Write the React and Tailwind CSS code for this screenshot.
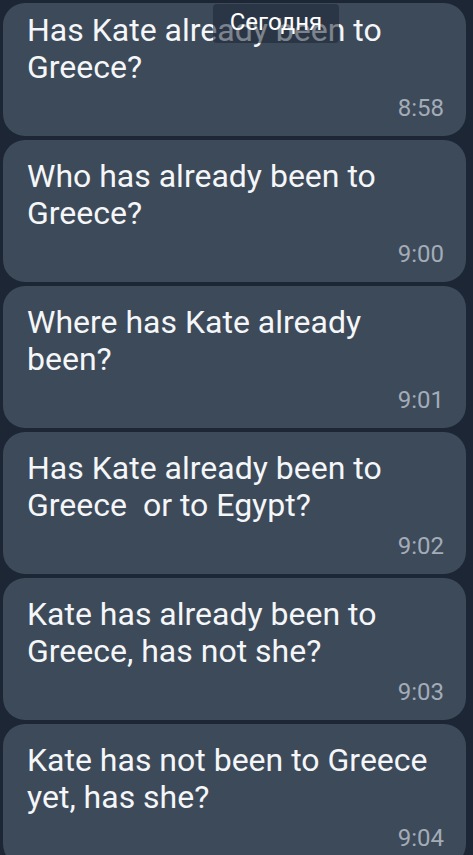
const messages = [
  { id: 1, text: 'Has Kate already been to Greece?', time: '8:58' },
  { id: 2, text: 'Who has already been to Greece?', time: '9:00' },
  { id: 3, text: 'Where has Kate already been?', time: '9:01' },
  { id: 4, text: 'Has Kate already been to Greece\u00a0 or to Egypt?', time: '9:02' },
  { id: 5, text: 'Kate has already been to Greece, has not she?', time: '9:03' },
  { id: 6, text: 'Kate has not been to Greece yet, has she?', time: '9:04' }
];

function Bubble({ message, first }) {
  return (
    <div
      className={`flex shrink-0 flex-col justify-between rounded-[22px] bg-[#3d4a5a] pl-[24px] pr-[22px] pb-[14px] ${
        first ? 'h-[133px] pt-[9px]' : 'h-[142px] pt-[18px]'
      }`}
    >
      <p className="max-w-[418px] text-[32px] leading-[37px] text-[#f4f6f8]">{message.text}</p>
      <span className="self-end text-[24px] leading-[27px] text-[#a3acb7]">{message.time}</span>
    </div>
  );
}

export default function App() {
  return (
    <div
      className="relative h-[855px] w-[473px] overflow-hidden bg-[#1c2634]"
      style={{ fontFamily: 'Roboto, "Noto Sans", sans-serif' }}
    >
      <div className="flex flex-col gap-[4px] pt-[3px] pl-[3px] pr-[7px]">
        {messages.map((message, index) => (
          <Bubble key={message.id} message={message} first={index === 0} />
        ))}
      </div>

      <div className="absolute left-[213px] top-[4px] flex h-[39px] w-[126px] items-start justify-center rounded-[4px] bg-[#1c2634]/55">
        <span className="mt-[4px] text-[24px] leading-[28px] text-white">Сегодня</span>
      </div>
    </div>
  );
}
